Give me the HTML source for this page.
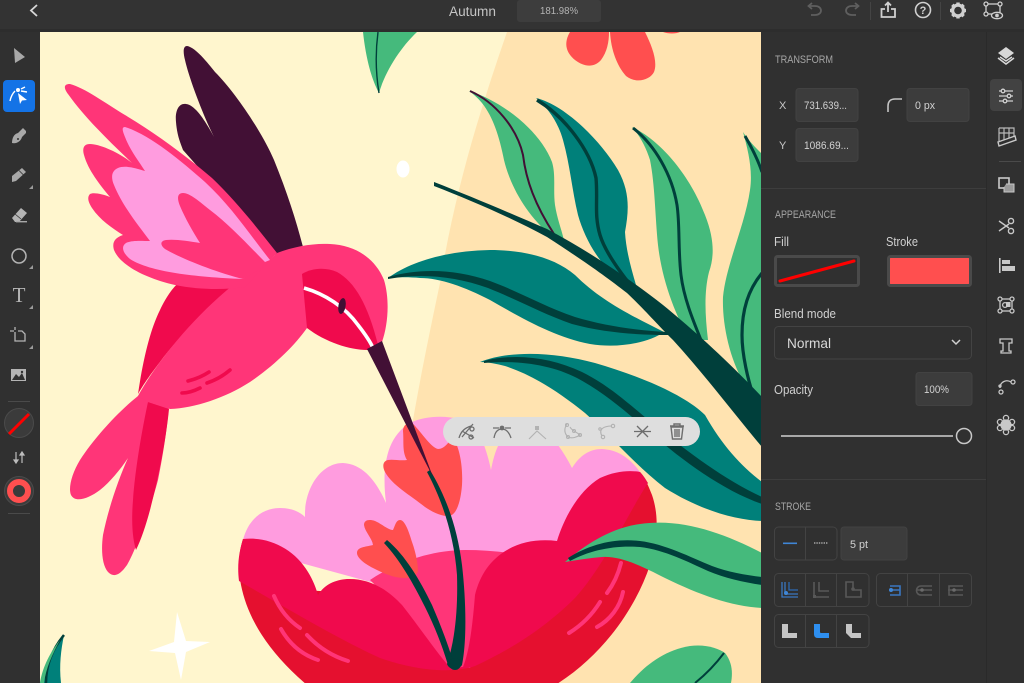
<!DOCTYPE html>
<html lang="en"><head><meta charset="utf-8"><title>Autumn</title>
<style>html,body{margin:0;padding:0;background:#303030;overflow:hidden}svg{display:block}text{font-family:"Liberation Sans",sans-serif}</style></head>
<body>
<svg xmlns="http://www.w3.org/2000/svg" width="1024" height="683" viewBox="0 0 1024 683">
<rect width="1024" height="683" fill="#303030"/>
<defs><clipPath id="c"><rect x="40" y="32" width="722" height="651"/></clipPath></defs>
<g clip-path="url(#c)">
<rect x="40" y="32" width="722" height="651" fill="#FFF6CE"/>
<path d="M507,32 C480,110 455,190 440,283 C428,340 420,380 413,420 L390,683 L762,683 L762,32Z" fill="#FFE3B0"/>
<!-- top leaf -->
<path d="M363,32 C366,60 372,80 379,93 C385,72 400,48 417,32Z" fill="#45BA7C"/>
<path d="M378,32 C375,55 376,75 379,93" fill="none" stroke="#003F3B" stroke-width="1.4"/>
<!-- coral top flower -->
<path d="M570,32 C564,42 565,52 575,60 C584,67 594,68 601,60 C607,52 609,42 609,32Z" fill="#FF4F4F"/>
<path d="M610,32 C611,50 617,66 626,76 C636,84 650,80 654,72 C658,62 652,46 645,32Z" fill="#FF4F4F"/>
<path d="M663,32 C668,34 676,34 680,32Z" fill="#FF4F4F"/>
<!-- leaves on branch -->
<path d="M743,132 C748,140 755,147 762,154 L762,400 L745,385 C730,360 722,325 723,297 C726,265 745,225 750,190 C753,170 748,150 743,132Z" fill="#45BA7C"/>
<path d="M745,136 C752,148 758,160 762,172" fill="none" stroke="#003F3B" stroke-width="3"/>
<path d="M762,273 C748,290 742,310 742,335 C742,355 748,380 754,398" fill="none" stroke="#003F3B" stroke-width="3.2"/>
<path d="M632,127 C660,140 690,175 705,215 C715,240 714,258 709,272 C704,292 705,315 708,340 L690,340 C675,315 662,280 658,245 C655,215 655,185 650,160 C646,147 640,136 632,127Z" fill="#45BA7C"/>
<path d="M633,128 C655,145 672,175 677,205 C680,225 678,250 681,275 C684,300 695,325 703,345" fill="none" stroke="#003F3B" stroke-width="3"/>
<path d="M536,98 C565,105 600,140 618,170 C630,192 629,210 625,232 C626,250 631,268 636,285 L620,280 C600,265 585,240 578,215 C572,190 570,165 563,140 C558,122 548,108 536,98Z" fill="#00807A"/>
<path d="M537,100 C565,117 590,150 596,178 C598,200 594,215 600,235 C605,252 620,272 632,287" fill="none" stroke="#003F3B" stroke-width="3.4"/>
<path d="M469,91 C500,100 540,130 552,162 C556,175 553,190 555,205 C557,218 561,228 564,240 L547,232 C525,212 510,185 504,160 C500,140 494,118 482,103 C477,97 473,94 469,91Z" fill="#45BA7C"/>
<path d="M470,91 C495,102 517,128 523,155 C526,180 535,205 554,234" fill="none" stroke="#421035" stroke-width="2"/>
<!-- branch -->
<path d="M434,182 C470,196 510,213 547,229 C587,250 627,277 663,305 C690,327 725,358 762,397 L762,447 C735,415 705,375 673,340 C655,322 645,310 627,293 C605,276 587,263 547,237 C510,217 470,200 434,186Z" fill="#003F3B"/>
<!-- teal leaf E -->
<path d="M388,278 C410,262 445,251 490,250 C525,250 555,258 575,275 C600,300 630,315 664,332 C650,342 620,349 590,344 C555,337 525,320 490,300 C465,287 440,278 420,278 C410,277 398,277 388,278Z" fill="#00807A"/>
<path d="M388,277 C420,268 455,269 490,281 C520,292 545,307 575,317 C605,326 640,331 668,332 L668,335 C640,335 605,333 572,324 C543,314 518,300 488,288 C455,276 420,273 388,279Z" fill="#003F3B"/>
<!-- teal leaf F -->
<path d="M480,362 C510,350 555,352 595,363 C640,376 685,395 705,415 C722,445 740,465 762,482 L762,521 C735,520 700,510 665,488 C635,465 610,435 585,413 C560,393 535,376 505,366 C497,364 488,362 480,362Z" fill="#00807A"/>
<path d="M484,361 C515,353 550,357 582,372 C612,387 632,407 657,427 C688,452 725,480 762,497 L762,504 C722,490 682,460 652,434 C627,413 607,394 577,378 C550,364 515,360 484,363Z" fill="#003F3B"/>
<!-- flower back pink -->
<path d="M243,540 C248,520 262,508 280,508 C292,508 300,512 305,517 C304,490 320,463 343,463 C365,464 378,485 386,503 C382,470 385,438 410,423 C430,413 460,416 475,425 C483,440 488,455 491,470 C494,455 497,445 505,435 C530,425 545,428 558,445 C563,452 568,460 572,468 C580,455 590,449 602,449 C620,450 632,460 642,475 L600,540 L400,590 L290,560Z" fill="#FF9CDF"/>
<!-- bowl -->
<path d="M243,539 C238,555 238,570 241,585 C248,620 270,655 313,690 L547,690 C600,660 635,610 650,565 C658,540 659,515 652,495 C648,485 645,478 640,472 L600,520 L500,600 L300,590Z" fill="#E5102F"/>
<!-- center -->
<path d="M370,580 C400,560 435,550 465,550 C480,550 495,551 510,553 L490,640 L470,668 L450,668 L420,640 L390,600Z" fill="#FF3578"/>
<!-- front petals -->
<path d="M243,539 C270,536 295,550 308,572 C313,580 316,588 318,595 C325,584 335,580 347,579 C370,578 388,590 402,605 C420,628 435,650 447,664 L452,668 L463,667 C470,650 473,620 475,595 C480,575 490,560 507,550 C522,541 540,539 557,541 C565,515 580,490 600,478 C615,471 630,470 640,472 C644,476 646,480 648,483 C630,510 605,565 575,598 C545,628 510,650 475,666 C455,673 420,672 380,658 C340,640 290,610 239,581 C237,565 239,552 243,539Z" fill="#F00A4D"/>
<!-- streaks -->
<g fill="none" stroke="#FF3578" stroke-width="4" stroke-linecap="round">
<path d="M274,596 C280,610 288,620 300,628"/><path d="M281,629 C290,645 303,655 318,660"/><path d="M307,635 C318,647 332,656 348,661"/>
<path d="M621,563 C618,575 613,585 607,593"/><path d="M623,592 C620,607 610,620 597,627"/><path d="M600,602 C592,615 582,625 569,633"/>
</g>
<!-- tulips -->
<path d="M403,431 C404,442 402,452 407,460 C400,461 393,459 388,460 C383,461 382,466 385,472 C392,485 410,495 425,507 C435,514 445,517 450,516 C458,513 461,498 462,485 C463,467 460,447 452,436 C450,442 444,449 438,449 C430,447 420,430 412,423 C408,422 403,425 403,431Z" fill="#FF4F4F"/>
<path d="M364,525 C364,520 369,519 375,521 C382,524 388,530 393,530 C395,526 396,520 400,520 C405,520 409,532 412,542 C416,553 418,565 418,571 C417,576 410,578 405,578 C393,578 383,573 373,568 C365,564 357,558 357,553 C357,547 365,547 373,545 C372,538 365,532 364,525Z" fill="#FF4F4F"/>
<!-- stems -->
<path d="M427,472 L430,470 C445,495 457,525 462,565 C466,600 467,640 462,665 C458,671 449,670 447,664 C455,640 458,610 457,575 C454,535 442,500 427,472Z" fill="#003F3B"/>
<path d="M384,543 L387,540 C405,555 420,580 432,605 C442,628 450,650 455,668 L448,665 C442,645 434,625 425,607 C413,583 400,560 384,543Z" fill="#003F3B"/>
<circle cx="455" cy="664" r="6" fill="#003F3B"/>
<!-- right lower leaf -->
<path d="M565,562 C585,545 610,528 640,524 C680,518 722,532 762,553 L762,608 C730,606 700,595 665,578 C640,565 620,556 602,557 C590,558 577,560 565,562Z" fill="#45BA7C"/>
<path d="M568,558 C590,544 615,538 640,541 C665,544 690,557 712,566 C728,572 745,575 762,577 L762,585 C742,582 725,578 708,571 C688,562 665,550 640,547 C615,545 590,550 570,561Z" fill="#003F3B"/>
<path d="M630,683 C645,665 665,650 690,646 C705,644 718,648 725,653 C732,662 733,672 731,683Z" fill="#45BA7C"/>
<path d="M724,653 C715,665 705,675 695,683" fill="none" stroke="#003F3B" stroke-width="2"/>
<!-- bottom left leaf -->
<path d="M64,635 C55,650 44,668 40,683 L61,683 C59,665 61,650 64,635Z" fill="#00807A"/>
<path d="M64,635 C50,652 46,668 46,683" fill="none" stroke="#003F3B" stroke-width="2.5"/>
<path d="M60,640 C48,655 42,670 40,683 L44,683 C46,668 52,655 60,640Z" fill="#45BA7C"/>
<!-- star, dot -->
<path d="M177,612 L186,641 L210,642 L186,652 L181,680 L175,653 L149,651 L174,642Z" fill="#fff"/>
<ellipse cx="403" cy="169" rx="6.5" ry="8.5" fill="#fff"/>
<!-- bird: dark feather -->
<path d="M187,46 C183,46 183,52 185,60 C189,78 203,115 214,137 C207,124 196,105 186,104 C178,103 175,112 176,122 C177,135 180,142 183,150 L277,256 L303,247 C296,220 287,192 274,160 C262,132 235,92 215,72 C204,58 194,47 187,46Z" fill="#421035"/>
<!-- tail -->
<path d="M150,385 L138,396 C118,412 95,437 80,460 C72,473 68,488 71,495 C75,503 88,499 100,490 C110,482 120,470 128,458 C118,480 108,510 103,535 C101,550 102,565 108,572 C114,578 120,575 127,565 C136,550 150,510 158,480 C163,455 167,430 169,405Z" fill="#FF3578"/>
<path d="M148,402 L169,409 C166,440 158,480 150,510 C146,525 141,540 136,550 C133,540 131,525 133,500 C135,470 142,430 148,402Z" fill="#F00A4D"/>
<!-- body -->
<path d="M138,394 C143,360 150,330 160,310 C167,295 175,285 180,282 L240,285 C210,305 180,335 160,362 C150,375 143,385 138,394Z" fill="#F00A4D"/>
<path d="M138,396 C155,365 190,320 233,285 L243,287 L277,253 C295,246 315,243 330,244 C355,245 375,258 384,280 C390,300 388,325 382,342 L367,350 L307,328 C295,345 275,365 250,382 C225,398 195,408 170,409 L148,402Z" fill="#FF3578"/>
<!-- wing -->
<path d="M70,84 C62,84 65,90 68,94 C85,118 110,142 132,163 C120,153 100,144 90,144 C84,144 82,148 84,155 C88,170 100,185 110,197 C103,194 93,192 90,194 C87,197 88,202 92,208 C100,220 112,228 123,235 C114,238 112,243 114,250 C120,265 145,278 175,285 C200,290 225,290 245,287 L277,253 C255,225 235,200 212,178 C185,155 155,133 125,115 C105,103 85,88 70,84Z" fill="#FF3578"/>
<path d="M125,127 C121,127 123,132 125,137 C130,150 138,160 145,171 C135,168 125,165 118,168 C111,171 111,178 114,185 C122,205 138,225 150,241 C142,241 132,240 126,243 C120,247 124,254 130,259 C150,272 195,277 243,279 L265,262 L270,260 C250,235 232,207 205,182 C180,160 150,135 125,127Z" fill="#FF9CDF"/>
<path d="M183,193 C177,193 177,199 180,206 C185,218 193,232 200,243 C188,241 175,239 166,240 C160,241 160,245 165,249 C180,258 215,272 243,279 L262,268 L265,262 C250,247 230,225 210,210 C200,202 190,193 183,193Z" fill="#FF3578"/>
<!-- head -->
<path d="M302,274 C312,268 325,267 337,272 C355,282 368,305 378,345 L367,350 C350,350 325,342 307,328 L302,274Z" fill="#F00A4D"/>
<path d="M304,288 C325,294 345,307 358,325 C365,334 370,341 373,348" fill="none" stroke="#fff" stroke-width="3.6"/>
<ellipse cx="342" cy="306" rx="3.6" ry="8" transform="rotate(10 342 306)" fill="#421035"/>
<path d="M367,349 L382,341 L433,477Z" fill="#421035"/>
<g fill="none" stroke="#F00A4D" stroke-width="3.6" stroke-linecap="round"><path d="M188,381 C196,379 203,376 209,372"/><path d="M207,383 C216,380 223,376 230,370"/><path d="M182,393 C188,393 194,391 200,388"/></g>
</g>
<!-- top bar -->
<rect width="1024" height="30" fill="#333333"/>
<rect y="29" width="1024" height="3" fill="#2d2d2d"/>
<path d="M37,5 L31,10.5 L37,16" fill="none" stroke="#d8d8d8" stroke-width="1.8"/>
<text x="449" y="16" font-size="13.5" fill="#c4c4c4" textLength="47" lengthAdjust="spacingAndGlyphs">Autumn</text>
<rect x="517" y="0" width="84" height="22" rx="3" fill="#3d3d3d"/>
<text x="540" y="14" font-size="10.5" fill="#b4b4b4" textLength="38" lengthAdjust="spacingAndGlyphs">181.98%</text>
<g fill="none" stroke="#5f5f5f" stroke-width="1.8"><path d="M809,6 L815,6 C823,6 823,15 815,15 L811,15"/><path d="M812,3 L808.5,6 L812,9" /><path d="M858,6 L852,6 C844,6 844,15 852,15 L856,15"/><path d="M855,3 L858.5,6 L855,9"/></g>
<rect x="870" y="2" width="1" height="18" fill="#444"/>
<rect x="940" y="2" width="1" height="18" fill="#444"/>
<g fill="none" stroke="#d0d0d0" stroke-width="1.8"><path d="M885,9 L881.5,9 L881.5,17 L895,17 L895,9 L891,9"/><path d="M888,12 L888,3 M885,5.5 L888,2.5 L891,5.5"/></g>
<circle cx="923" cy="10" r="7.5" fill="none" stroke="#d0d0d0" stroke-width="1.6"/>
<text x="923" y="14" text-anchor="middle" font-size="11" font-weight="bold" fill="#d0d0d0">?</text>
<g transform="translate(958,10.5)"><circle r="5.4" fill="none" stroke="#cfcfcf" stroke-width="3.2"/><g fill="#cfcfcf"><rect x="-1.7" y="-8" width="3.4" height="3.4"/><rect x="-1.7" y="4.6" width="3.4" height="3.4"/><rect x="-8" y="-1.7" width="3.4" height="3.4"/><rect x="4.6" y="-1.7" width="3.4" height="3.4"/><rect x="-1.7" y="-8" width="3.4" height="3.4" transform="rotate(45)"/><rect x="-1.7" y="4.6" width="3.4" height="3.4" transform="rotate(45)"/><rect x="-8" y="-1.7" width="3.4" height="3.4" transform="rotate(45)"/><rect x="4.6" y="-1.7" width="3.4" height="3.4" transform="rotate(45)"/></g></g>
<g fill="none" stroke="#cfcfcf" stroke-width="1.3"><rect x="986" y="4" width="14" height="10"/><circle cx="986" cy="4" r="2" fill="#333"/><circle cx="1000" cy="4" r="2" fill="#333"/><circle cx="986" cy="14" r="2" fill="#333"/><ellipse cx="997" cy="15.5" rx="5.5" ry="3.2" fill="#333"/><circle cx="997" cy="15.5" r="1.2" fill="#cfcfcf"/></g>
<!-- left tools -->
<path d="M14,48 L25,57 L15,63Z" fill="#a8a8a8"/>
<rect x="3" y="80" width="32" height="32" rx="4" fill="#1473E6"/>
<path d="M18,93 L27,100 L22,100.5 L20,104Z" fill="#fff"/>
<g fill="none" stroke="#fff" stroke-width="1.4"><path d="M10,101 C11,96 13,93 15,91"/><path d="M21,89 L25,87"/><path d="M21,91 L27,92"/></g><circle cx="18" cy="90" r="2" fill="#fff"/>
<path d="M12,143 C12,138 14,134 18,133 L23,128 L26,131 L26,133 L22,137 C21,141 17,144 12,143Z" fill="#a8a8a8"/><circle cx="18" cy="139" r="1" fill="#303030"/>
<path d="M12,176 L22,168 L26,172 L16,181 L12,182Z" fill="#a8a8a8"/><path d="M19,170.5 L23.5,175" stroke="#303030" stroke-width="0.8"/>
<path d="M33,185 L29,189 L33,189Z" fill="#9a9a9a"/>
<path d="M12,218 L21,208 L27,213 L19,222 L15,222Z" fill="#b4b4b4"/><path d="M15,214 L21,219" stroke="#303030" stroke-width="0.8"/>
<rect x="16" y="221" width="11" height="1.4" fill="#a8a8a8"/>
<circle cx="19" cy="256" r="7" fill="none" stroke="#b4b4b4" stroke-width="1.5"/>
<path d="M33,265 L29,269 L33,269Z" fill="#9a9a9a"/>
<text x="19" y="302" text-anchor="middle" font-size="21" fill="#b4b4b4" style="font-family:'Liberation Serif',serif">T</text>
<path d="M33,305 L29,309 L33,309Z" fill="#9a9a9a"/>
<g fill="none" stroke="#b4b4b4" stroke-width="1.3"><path d="M15,332 L15,341 L25,341 L25,334 L22,331 L18,331"/><path d="M10,331 L14,331 M15,327 L15,330"/></g>
<path d="M33,345 L29,349 L33,349Z" fill="#9a9a9a"/>
<rect x="11" y="369" width="15" height="12" fill="#b4b4b4"/><path d="M12,380 L16,374 L19,377 L22,373 L25,380Z" fill="#303030"/><circle cx="22" cy="372" r="1.2" fill="#303030"/>
<rect x="8" y="401" width="22" height="1" fill="#4a4a4a"/>
<circle cx="19" cy="423" r="14.5" fill="#3b3b3b" stroke="#4b4b4b"/>
<path d="M9,434 L29,414" stroke="#ff0000" stroke-width="3"/>
<g stroke="#bdbdbd" stroke-width="1.2" fill="#bdbdbd"><path d="M16,452 L16,462"/><path d="M22,453 L22,463"/><path d="M14,460 L18,460 L16,463Z"/><path d="M20,455 L24,455 L22,452Z"/></g>
<circle cx="19" cy="491" r="14.5" fill="#3b3b3b" stroke="#4b4b4b"/>
<circle cx="19" cy="491" r="9" fill="none" stroke="#FF4F4F" stroke-width="6"/>
<rect x="8" y="513" width="22" height="1" fill="#4a4a4a"/>
<!-- right panel -->
<rect x="761" y="32" width="263" height="651" fill="#303030"/>
<rect x="986" y="32" width="1" height="651" fill="#2a2a2a"/>
<rect x="761" y="188" width="225" height="1" fill="#3d3d3d"/>
<rect x="761" y="479" width="225" height="1" fill="#3d3d3d"/>
<g fill="#a6a6a6" font-size="11">
<text x="775" y="63" textLength="58" lengthAdjust="spacingAndGlyphs">TRANSFORM</text>
<text x="775" y="218" textLength="61" lengthAdjust="spacingAndGlyphs">APPEARANCE</text>
<text x="775" y="510" textLength="36" lengthAdjust="spacingAndGlyphs">STROKE</text>
</g>
<g fill="#c8c8c8" font-size="11">
<text x="779" y="109">X</text><text x="779" y="149">Y</text>
</g>
<g fill="#3c3c3c" stroke="#424242">
<rect x="796" y="88.5" width="62" height="33" rx="3"/><rect x="796" y="128.5" width="62" height="33" rx="3"/><rect x="907" y="88.5" width="62" height="33" rx="3"/>
<rect x="916" y="372.5" width="56" height="33" rx="3"/><rect x="841" y="527" width="66" height="33" rx="3"/>
</g>
<g fill="#d2d2d2" font-size="11">
<text x="804" y="109" textLength="43" lengthAdjust="spacingAndGlyphs">731.639...</text>
<text x="804" y="149" textLength="45" lengthAdjust="spacingAndGlyphs">1086.69...</text>
<text x="915" y="109" textLength="20" lengthAdjust="spacingAndGlyphs">0 px</text>
<text x="924" y="393" textLength="25" lengthAdjust="spacingAndGlyphs">100%</text>
<text x="850" y="548" textLength="18" lengthAdjust="spacingAndGlyphs">5 pt</text>
</g>
<path d="M888,112 L888,106 C888,101 891,99 895,99 L902,99" fill="none" stroke="#c4c4c4" stroke-width="1.6"/>
<g fill="#d0d0d0" font-size="12.5">
<text x="774" y="246" textLength="15" lengthAdjust="spacingAndGlyphs">Fill</text>
<text x="886" y="246" textLength="32" lengthAdjust="spacingAndGlyphs">Stroke</text>
<text x="774" y="318" textLength="62" lengthAdjust="spacingAndGlyphs">Blend mode</text>
<text x="774" y="394" textLength="39" lengthAdjust="spacingAndGlyphs">Opacity</text>
</g>
<rect x="775.5" y="256.5" width="83" height="29" rx="2" fill="#303030" stroke="#4a4a4a" stroke-width="3"/>
<path d="M780,281 L854,261" stroke="#ff0000" stroke-width="3" stroke-linecap="round"/>
<rect x="888.5" y="256.5" width="82" height="29" rx="2" fill="#FF4F4F" stroke="#4a4a4a" stroke-width="3"/>
<rect x="774.5" y="326.5" width="197" height="32.5" rx="4" fill="#303030" stroke="#434343"/>
<text x="787" y="348" font-size="14" fill="#d8d8d8" textLength="44" lengthAdjust="spacingAndGlyphs">Normal</text>
<path d="M952,340 L956,344 L960,340" fill="none" stroke="#d0d0d0" stroke-width="1.5"/>
<rect x="781" y="435" width="172" height="2" fill="#a8a8a8"/>
<circle cx="964" cy="436" r="7.5" fill="none" stroke="#c8c8c8" stroke-width="1.5"/>
<!-- stroke controls -->
<g fill="none" stroke="#434343">
<rect x="774.5" y="527" width="62.5" height="33" rx="4"/><path d="M805.5,527 V560"/>
<rect x="774.5" y="573.5" width="94.5" height="33" rx="4"/><path d="M805.5,574 V606 M836.5,574 V606"/>
<rect x="876.5" y="573.5" width="95" height="33" rx="4"/><path d="M907.5,574 V606 M939.5,574 V606"/>
<rect x="774.5" y="614.5" width="94.5" height="33" rx="4"/><path d="M805.5,615 V647 M836.5,615 V647"/>
</g>
<rect x="783" y="542.5" width="14" height="1.6" fill="#3F86D6"/>
<path d="M814,543 H828" stroke="#bdbdbd" stroke-width="1.2" stroke-dasharray="1.4 1"/>
<g fill="none" stroke="#3a77c0" stroke-width="1.3"><path d="M782,582 V597 H798 M785,582 V594 H798"/><path d="M789,582 V590 H798" stroke="#2d6ab3"/></g><circle cx="786" cy="593" r="2" fill="#3F86D6"/>
<g fill="none" stroke="#585858" stroke-width="1.6"><path d="M814,582 V597 H829 M819,582 V591 H829"/><path d="M846,582 V597 H861 V590 H853 V582Z"/><path d="M889,590 H900 M890,586 H900 V595 H890" stroke="#3a77c0"/><path d="M916,590 H932 M932,586 H921 C915,586 915,595 921,595 H932"/><path d="M948,590 H963 M963,586 H949 V595 H963"/></g>
<rect x="813" y="595" width="3" height="3" fill="#585858"/><circle cx="853" cy="589" r="1.8" fill="#585858"/><circle cx="891" cy="590" r="2" fill="#3F86D6"/><circle cx="922" cy="590" r="1.8" fill="#6a6a6a"/><circle cx="954" cy="590" r="1.8" fill="#6a6a6a"/>
<path d="M782,624 H788 V633 H797 V638 H782Z" fill="#c4c4c4"/>
<path d="M814,624 H820 V632 Q820,633 821,633 H829 V638 H818 Q814,638 814,634Z" fill="#2E8FEF"/>
<path d="M846,624 H852 V633 H861 V638 H851 L846,633Z" fill="#c4c4c4"/>
<!-- right rail -->
<path d="M1006,47 L1014,53 L1006,59 L998,53Z" fill="#d8d8d8"/><path d="M998,58 L1006,64 L1014,58 M1000,57 L1006,61 L1012,57" fill="none" stroke="#d8d8d8" stroke-width="1.5"/>
<rect x="990" y="79" width="32" height="32" rx="4" fill="#424242"/>
<g stroke="#d0d0d0" stroke-width="1.3" fill="#424242"><path d="M999,91 H1013 M999,96 H1013 M999,101 H1013"/><circle cx="1003" cy="91" r="1.8"/><circle cx="1009" cy="96" r="1.8"/><circle cx="1005" cy="101" r="1.8"/></g>
<g fill="none" stroke="#b8b8b8" stroke-width="1.2"><path d="M999,128 H1014 V137 M999,128 V141 M1004,128 V140 M1009,128 V138 M999,133 H1014"/></g><path d="M998,142 L1015,136 L1016,140 L999,146Z" fill="none" stroke="#c8c8c8" stroke-width="1.4"/>
<rect x="999" y="161" width="22" height="1" fill="#4a4a4a"/>
<rect x="999" y="178" width="10" height="10" fill="none" stroke="#c8c8c8" stroke-width="1.6"/><path d="M1006,184 H1014 V192 H1004 V187" fill="#9a9a9a" stroke="#c8c8c8"/>
<g fill="none" stroke="#c8c8c8" stroke-width="1.4"><circle cx="1011" cy="221" r="2.6"/><circle cx="1011" cy="231" r="2.6"/><path d="M999,221 L1009,228 M999,231 L1009,224"/></g>
<rect x="999" y="258" width="1.6" height="15" fill="#c8c8c8"/><rect x="1002" y="260" width="8" height="4" fill="#c8c8c8"/><rect x="1002" y="266" width="13" height="5" fill="#c8c8c8"/>
<g fill="none" stroke="#c8c8c8" stroke-width="1.3"><rect x="1000" y="299" width="12" height="12"/><circle cx="1000" cy="299" r="2" fill="#303030"/><circle cx="1012" cy="299" r="2" fill="#303030"/><circle cx="1000" cy="311" r="2" fill="#303030"/><circle cx="1012" cy="311" r="2" fill="#303030"/><circle cx="1005" cy="305" r="2.4"/></g><rect x="1006" y="302" width="4.5" height="5" fill="#c8c8c8"/>
<path d="M1000,339 H1012 V343 H1009 V351 H1011 V353 H1001 V351 H1003 V343 H1000Z" fill="none" stroke="#c8c8c8" stroke-width="1.3"/>
<g fill="none" stroke="#c8c8c8" stroke-width="1.3"><path d="M1000,388 C1000,382 1006,379 1011,382"/><circle cx="1001" cy="392" r="2"/><circle cx="1013" cy="382" r="2"/><circle cx="1000" cy="386" r="1"/></g>
<g fill="none" stroke="#c8c8c8" stroke-width="1.3"><circle cx="1006" cy="425" r="5" fill="#c8c8c8"/><circle cx="1006" cy="418" r="2.6"/><circle cx="1006" cy="432" r="2.6"/><circle cx="1000" cy="422" r="2.6"/><circle cx="1012" cy="422" r="2.6"/><circle cx="1000" cy="428" r="2.6"/><circle cx="1012" cy="428" r="2.6"/></g>
<!-- floating toolbar -->
<rect x="443" y="417" width="257" height="29" rx="14.5" fill="#DEDEDE"/>
<g fill="none" stroke="#6e6e6e" stroke-width="1.3">
<path d="M459,438 C461,431 465,428 471,426"/><path d="M462,431 L474,438 M462,437 L473,424"/><circle cx="472" cy="429" r="2"/><circle cx="471" cy="437" r="2"/>
<path d="M494,438 C495,432 498,429 502,429 C506,429 509,432 511,438"/><path d="M493,428 H499 M505,428 H511"/>
</g>
<circle cx="502" cy="428" r="2.4" fill="#6e6e6e"/>
<g fill="none" stroke="#b2b2b2" stroke-width="1.1">
<path d="M529,439 L537,431 L546,439"/>
<path d="M567,424 C563,430 565,434 568,437 C572,439 577,437 580,435 C577,432 572,431 570,427"/><circle cx="567" cy="425" r="1.5"/><circle cx="568" cy="437" r="1.5"/><circle cx="574" cy="431" r="1.5"/><circle cx="580" cy="435" r="1.5"/>
<path d="M602,436 C598,429 604,426 612,426"/><circle cx="603" cy="437" r="1.7"/><circle cx="613" cy="426" r="1.7"/><circle cx="600" cy="429" r="1.2"/>
</g>
<rect x="535" y="426" width="4" height="4" fill="#b2b2b2"/>
<g fill="none" stroke="#6e6e6e" stroke-width="1.3"><path d="M634,431.5 H651"/><path d="M637,426 L648,437 M648,426 L637,437"/></g>
<path d="M670,426 H684 M674,426 V424 H680 V426 M671,427 L672.5,439 H681.5 L683,427Z M675,429 V437 M677,429 V437 M679,429 V437" fill="none" stroke="#6e6e6e" stroke-width="1.4"/>
</svg>
</body></html>
